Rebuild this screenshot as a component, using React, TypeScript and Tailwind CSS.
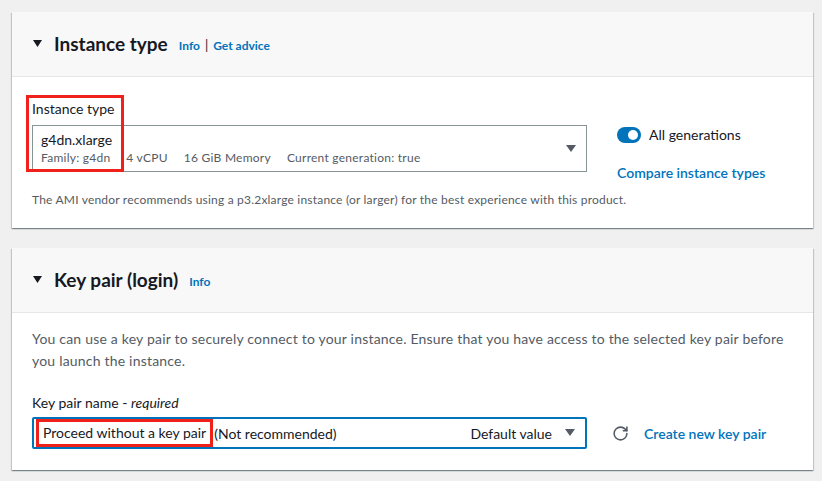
import { RotateCw } from 'lucide-react'

const font = { fontFamily: 'Lato, "Liberation Sans", sans-serif' }

function Caret({ className, w = 10 }: { className?: string; w?: number }) {
  return (
    <svg width={w} height="8" viewBox="0 0 10 8" preserveAspectRatio="none" className={className}>
      <path d="M0 0h10L5 7z" fill="currentColor" />
    </svg>
  )
}

function Header({ title, links }: { title: string; links: string[] }) {
  return (
    <div className="flex h-[65px] items-center gap-[12px] border-b border-[#e5e7e7] bg-[#f8f8f8] pl-[21px]">
      <Caret w={9} className="text-[#16191f]" />
      <h2 className="text-[19px] font-bold text-[#16191f]">{title}</h2>
      <div className="-ml-[1px] mt-[3px] flex items-center gap-[5px] text-[12px] font-bold text-[#0073bb]">
        {links.map((l, i) => (
          <span key={l} className="flex items-center gap-[5px]">
            {i > 0 && <span className="text-[13px] font-normal text-[#16191f]">|</span>}
            {l}
          </span>
        ))}
      </div>
    </div>
  )
}

export default function App() {
  return (
    <div className="min-h-[481px] bg-[#eff0ef] pl-[12px] pr-[9px] pt-[12px] text-[#16191f]" style={font}>
      <section className="relative bg-white shadow-[0_1px_1px_0_rgba(0,28,36,0.3),1px_1px_1px_0_rgba(0,28,36,0.15),-1px_1px_1px_0_rgba(0,28,36,0.15)]">
        <Header title="Instance type" links={['Info', 'Get advice']} />
        <div className="px-[20px] pb-[20px] pt-[22px]">
          <div className="flex items-start">
            <div className="w-[555px]">
              <div className="text-[14px] leading-[20px]">Instance type</div>
              <div className="mt-[6px] flex h-[47px] items-center justify-between border border-[#879596] pl-[8px] pr-[10px]">
                <div>
                  <div className="text-[14px] leading-[18px]">g4dn.xlarge</div>
                  <div className="flex gap-[16px] text-[12px] leading-[18px] tracking-[0.25px] text-[#545b64]">
                    <span>Family: g4dn</span>
                    <span>4 vCPU</span>
                    <span>16 GiB Memory</span>
                    <span>Current generation: true</span>
                  </div>
                </div>
                <Caret className="text-[#545b64]" />
              </div>
            </div>
            <div className="ml-[30px] pt-[28px]">
              <div className="flex h-[16px] items-center gap-[8px]">
                <div className="flex h-[16px] w-[24px] items-center justify-end rounded-full bg-[#0073bb] pr-[3px]">
                  <div className="h-[10px] w-[10px] rounded-full bg-white" />
                </div>
                <span className="text-[14px] leading-[16px]">All generations</span>
              </div>
              <div className="mt-[22px] text-[14px] font-semibold leading-[16px] text-[#0073bb]">Compare instance types</div>
            </div>
          </div>
          <p className="mt-[11px] text-[12px] leading-[16px] tracking-[0.2px] text-[#545b64]">
            The AMI vendor recommends using a p3.2xlarge instance (or larger) for the best experience with this product.
          </p>
        </div>
        <div className="absolute left-[14px] top-[83px] h-[77px] w-[98px] border-[3px] border-[#f0201a]" />
      </section>

      <section className="mt-[20px] bg-white shadow-[0_1px_1px_0_rgba(0,28,36,0.3),1px_1px_1px_0_rgba(0,28,36,0.15),-1px_1px_1px_0_rgba(0,28,36,0.15)]">
        <Header title="Key pair (login)" links={['Info']} />
        <div className="px-[20px] pb-[21px] pt-[15px]">
          <p className="text-[14px] leading-[22px] tracking-[0.2px] text-[#545b64]">
            You can use a key pair to securely connect to your instance. Ensure that you have access to the selected key pair before you launch the instance.
          </p>
          <div className="mt-[21px] text-[14px] leading-[20px]">
            Key pair name - <i>required</i>
          </div>
          <div className="flex items-center">
            <div className="mt-[4px] flex h-[32px] w-[555px] items-center justify-between rounded-[2px] border-2 border-[#0073bb] pl-[2px] pr-[10px] text-[14px]">
              <div className="flex items-center">
                <span className="border-[3px] border-[#f0201a] px-[4px] leading-[22px]">Proceed without a key pair</span>
                <span className="ml-[1px]">(Not recommended)</span>
              </div>
              <div className="flex items-center gap-[13px]">
                <span>Default value</span>
                <Caret className="text-[#545b64]" />
              </div>
            </div>
            <RotateCw size={17} strokeWidth={2.2} className="ml-[25px] mt-[4px] text-[#545b64]" />
            <span className="ml-[15px] mt-[4px] text-[14px] font-semibold text-[#0073bb]">Create new key pair</span>
          </div>
        </div>
      </section>
    </div>
  )
}
